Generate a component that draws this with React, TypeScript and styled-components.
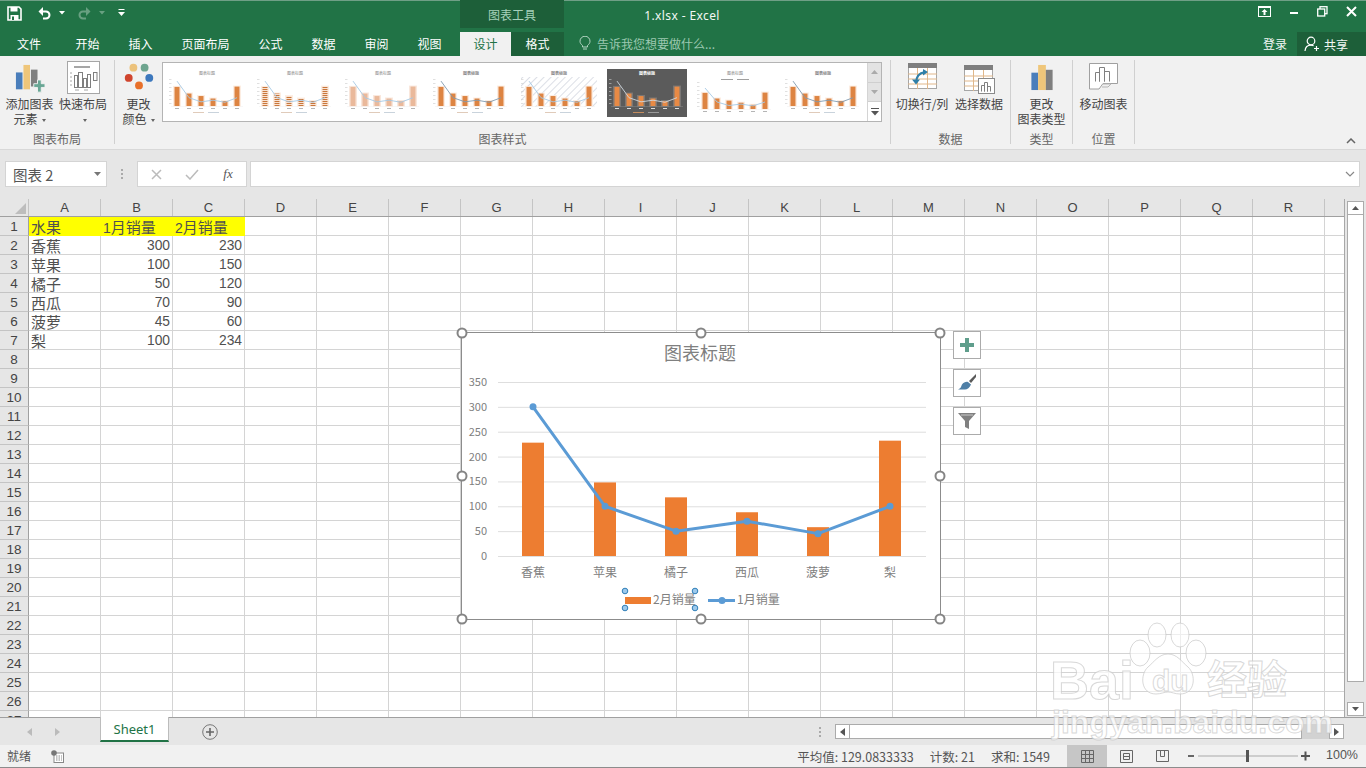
import React from "react";
import styled, { createGlobalStyle } from "styled-components";

const CJK = `"Noto Sans CJK SC", "Noto Sans", sans-serif`;
const LATIN = `"Liberation Sans", "Noto Sans CJK SC", sans-serif`;

const Global = createGlobalStyle`
  html, body { margin: 0; padding: 0; background: #fff; overflow: hidden; }
  * { box-sizing: border-box; }
`;

const Page = styled.div`
  position: relative; width: 1366px; height: 768px; overflow: hidden;
  display: flex; flex-direction: column;
  font-family: ${CJK}; font-size: 12px; color: #444;
`;

/* ---------- title bar ---------- */
const TitleBar = styled.div`
  height: 28px; flex: none; display: flex; align-items: stretch;
  background: #217346; border-top: 1px solid #6f9f86; color: #fff;
`;
const Qat = styled.div`
  width: 460px; flex: none; display: flex; align-items: center; padding-left: 7px; padding-bottom: 3px;
`;
const QatSlot = styled.span<{ $w: number }>`
  width: ${p => p.$w}px; flex: none; display: flex; align-items: center;
`;
const ContextLabel = styled.div`
  width: 104px; flex: none; background: #1d5f39; color: #a6d1ba; margin-top: -1px;
  display: flex; align-items: center; justify-content: center;
`;
const DocTitle = styled.div`
  width: 236px; flex: none; display: flex; align-items: center; justify-content: center; padding-top: 1px;
  font-family: "Noto Sans", sans-serif; font-size: 12px; letter-spacing: .4px; color: #f2f7f4;
`;
const WinControls = styled.div`
  margin-left: auto; display: flex; align-items: center; margin-top: -6px;
`;
const WinButton = styled.span`
  width: 29px; display: flex; justify-content: center; align-items: center;
`;

/* ---------- tab bar ---------- */
const TabBar = styled.div`
  height: 28px; flex: none; display: flex; align-items: stretch; background: #217346; color: #fff;
`;
const Tab = styled.div<{ $w: number; $active?: boolean; $dark?: boolean; $gap?: number }>`
  width: ${p => p.$w}px; flex: none; margin-left: ${p => p.$gap ?? 0}px;
  display: flex; align-items: center; justify-content: center; padding-bottom: 1px;
  margin-top: 4px;
  background: ${p => (p.$active ? "#f1f1f1" : p.$dark ? "#1d5f39" : "transparent")};
  color: ${p => (p.$active ? "#217346" : "#fff")};
`;
const Tell = styled.div`
  display: flex; align-items: center; gap: 6px; margin-left: 15px; color: #9cc8b0; padding-top: 3px;
`;
const SignIn = styled.div`
  margin-left: auto; width: 62px; display: flex; align-items: center; justify-content: center;
  padding-top: 3px; padding-left: 18px; color: #f2f7f4;
`;
const Share = styled.div`
  width: 69px; margin-top: 4px; background: #1d5f39; display: flex; align-items: center; gap: 3px; padding-left: 7px; color: #f2f7f4;
`;

/* ---------- ribbon ---------- */
const Ribbon = styled.div`
  height: 94px; flex: none; display: flex; background: #f1f1f1; border-bottom: 1px solid #d8d8d8; position: relative;
`;
const Group = styled.div<{ $w: number }>`
  width: ${p => p.$w}px; flex: none; display: flex; flex-direction: column; align-items: stretch;
  position: relative;
  &::after { content: ""; position: absolute; right: 0; top: 4px; bottom: 5px; width: 1px; background: #d0d0d0; }
`;
const GroupBody = styled.div`
  height: 75px; flex: none; display: flex; align-items: flex-start;
`;
const GroupLabel = styled.div`
  text-align: center; color: #666; line-height: 14px; padding-top: 1px; padding-right: 1px;
`;
const BigButton = styled.div<{ $w: number }>`
  width: ${p => p.$w}px; flex: none; display: flex; flex-direction: column; align-items: center;
`;
const IconBox = styled.div<{ $pb: number }>`
  height: 40px; flex: none; display: flex; align-items: flex-end; justify-content: center; padding-bottom: ${p => p.$pb}px;
`;
const BtnText = styled.div`
  color: #444; line-height: 15px; text-align: center; white-space: nowrap;
`;
const Caret = styled.span`
  display: inline-block; width: 0; height: 0; vertical-align: middle; margin-left: 4px;
  border-left: 2.5px solid transparent; border-right: 2.5px solid transparent; border-top: 3px solid #666;
`;
const Gallery = styled.div`
  width: 720px; height: 60px; margin: 6px 0 0 0; flex: none; display: flex;
  background: #fff; border: 1px solid #b4b4b4;
`;
const Thumbs = styled.div`
  flex: 1; display: flex; overflow: hidden;
`;
const GalleryScroll = styled.div`
  width: 14px; flex: none; display: flex; flex-direction: column; border-left: 1px solid #d4d4d4;
`;
const ScrollCell = styled.div<{ $on?: boolean }>`
  flex: 1; display: flex; align-items: center; justify-content: center;
  background: ${p => (p.$on ? "#fff" : "#e3e3e3")}; border-bottom: 1px solid #cfcfcf;
  &:last-child { border-bottom: 0; }
`;
const Collapse = styled.span`
  position: absolute; right: 10px; bottom: 5px; display: flex;
`;

/* ---------- formula bar ---------- */
const FormulaBar = styled.div`
  height: 49px; flex: none; background: #e6e6e6; display: flex; align-items: flex-start; padding: 11px 6px 0 5px;
`;
const NameBox = styled.div`
  width: 102px; height: 26px; background: #fff; border: 1px solid #d4d4d4; display: flex; align-items: center;
  justify-content: space-between; padding: 0 5px 0 7px; font-size: 14.5px; color: #555;
`;
const Dots = styled.div`
  width: 30px; flex: none; height: 26px; display: flex; flex-direction: column; align-items: center; justify-content: center; gap: 2px;
  & > i { width: 2px; height: 2px; background: #aaa; display: block; }
`;
const FxBox = styled.div`
  width: 110px; height: 26px; flex: none; background: #fff; border: 1px solid #d4d4d4; display: flex; align-items: center;
`;
const FxSlot = styled.span`
  width: 36px; display: flex; justify-content: center; align-items: center;
  font-family: "Liberation Serif", serif; font-style: italic; font-size: 13px; color: #555;
`;
const FormulaInput = styled.div`
  flex: 1; height: 26px; margin-left: 3px; background: #fff; border: 1px solid #d4d4d4; display: flex; align-items: center; justify-content: flex-end; padding-right: 4px;
`;

/* ---------- sheet ---------- */
const Sheet = styled.div`
  height: 518px; flex: none; position: relative; display: flex; background: #fff; overflow: hidden;
`;
const GridArea = styled.div`
  width: 1345px; flex: none; display: flex; flex-direction: column; overflow: hidden; border-right: 1px solid #a8a8a8;
`;
const HeadRow = styled.div`
  display: flex; height: 18px; flex: none; background: #e6e6e6; border-bottom: 1px solid #a0a0a0;
`;
const Corner = styled.div`
  width: 29px; flex: none; border-right: 1px solid #c4c4c4; position: relative; overflow: hidden;
  &::after { content: ""; position: absolute; right: 2px; bottom: 2px; width: 0; height: 0;
    border-left: 11px solid transparent; border-bottom: 11px solid #bdbdbd; }
`;
const ColHead = styled.div`
  width: 72px; flex: none; text-align: center; line-height: 18px; font-family: ${LATIN}; font-size: 13px; color: #444;
  border-right: 1px solid #c4c4c4;
`;
const Rows = styled.div`
  height: 500px; overflow: hidden;
`;
const Row = styled.div`
  display: flex; height: 19px;
`;
const RowHead = styled.div`
  width: 29px; flex: none; background: #e6e6e6; border-right: 1px solid #a0a0a0; border-bottom: 1px solid #c4c4c4;
  text-align: center; line-height: 18px; padding-top: 1px; font-family: "Liberation Sans", sans-serif; font-size: 13.5px; color: #444;
`;
const Cell = styled.div<{ $num?: boolean; $fill?: boolean }>`
  width: 72px; flex: none; height: 19px; white-space: nowrap;
  border-right: 1px solid ${p => (p.$fill ? "#ffff00" : "#d4d4d4")}; border-bottom: 1px solid ${p => (p.$fill ? "#ffff00" : "#d4d4d4")};
  background: ${p => (p.$fill ? "#ffff00" : "#fff")};
  padding: 1px 2px 0; line-height: 17px; color: #505050;
  text-align: ${p => (p.$num ? "right" : "left")};
  font-family: ${p => (p.$num ? `"Liberation Sans", sans-serif` : CJK)};
  font-size: ${p => (p.$num ? "13.8px" : "15px")};
`;
const Digit = styled.span`
  font-family: "Liberation Sans", sans-serif; font-size: 14px;
`;
const VScroll = styled.div`
  flex: 1; background: #e6e6e6; display: flex; flex-direction: column; padding: 2px 2px 1px 2px;
`;
const ScrollBtn = styled.div`
  height: 14px; flex: none; background: #fff; border: 1px solid #ababab; display: flex; align-items: center; justify-content: center;
`;
const VThumb = styled.div`
  height: 467px; flex: none; background: #fff; border: 1px solid #ababab; border-top: 0; margin-bottom: auto;
`;

/* ---------- chart overlay ---------- */
const ChartFrame = styled.div`
  position: absolute; left: 461px; top: 133px; width: 480px; height: 288px;
  background: #fff; border: 1px solid #8c8c8c;
`;
const ChartSvg = styled.svg`
  position: absolute; left: -1px; top: -1px; display: block; overflow: visible;
  & text { font-family: ${CJK}; fill: #808080; }
`;
const Handle = styled.span`
  position: absolute; width: 11px; height: 11px; border-radius: 50%; background: #fff; border: 2px solid #858585;
  transform: translate(-50%, -50%);
`;
const SideButtons = styled.div`
  position: absolute; left: 953px; top: 132px; display: flex; flex-direction: column; gap: 10px;
`;
const SideButton = styled.div`
  width: 28px; height: 28px; background: #fff; border: 1px solid #ababab; display: flex; align-items: center; justify-content: center;
`;

/* ---------- sheet tabs ---------- */
const TabsBar = styled.div`
  height: 28px; flex: none; background: #e6e6e6; border-top: 1px solid #a0a0a0; display: flex; align-items: flex-start;
`;
const NavArrows = styled.div`
  width: 100px; flex: none; height: 27px; display: flex; align-items: center; gap: 23px; padding-left: 27px;
`;
const SheetTab = styled.div`
  width: 69px; height: 25px; flex: none; margin-top: -1px; background: #fff; border: 1px solid #bcbcbc; border-top: 0; border-bottom: 2px solid #217346;
  color: #217346; font-family: "Noto Sans", sans-serif; font-size: 13px; text-align: center; line-height: 25px;
`;
const AddSheet = styled.div`
  margin-left: 33px; height: 27px; display: flex; align-items: center;
`;
const TabDots = styled(Dots)`
  margin-left: 596px; height: 27px; width: 12px;
`;
const HScroll = styled.div`
  margin-left: 9px; margin-top: 6px; width: 509px; height: 15px; flex: none; display: flex; background: #d2d2d2; border: 0;
`;
const HBtn = styled.div`
  width: 15px; flex: none; background: #fff; border: 1px solid #ababab; display: flex; align-items: center; justify-content: center;
`;
const HThumb = styled.div`
  width: 452px; flex: none; background: #fff; border: 1px solid #ababab; border-left: 0; margin-right: auto;
`;

/* ---------- status bar ---------- */
const StatusBar = styled.div`
  height: 23px; flex: none; background: #f1f1f1; border-bottom: 1px solid #8c8c8c; display: flex; align-items: stretch; color: #555;
`;
const Ready = styled.div`
  width: 51px; flex: none; padding-left: 7px; line-height: 21px;
`;
const MacroIcon = styled.div`
  display: flex; align-items: center;
`;
const Stats = styled.div`
  margin-left: auto; display: flex; gap: 16px; align-items: center; padding-right: 17px; white-space: nowrap; font-size: 12.5px;
`;
const ViewBtn = styled.div<{ $on?: boolean; $w: number }>`
  width: ${p => p.$w}px; flex: none; display: flex; align-items: center; justify-content: center;
  background: ${p => (p.$on ? "#c6c6c6" : "transparent")};
`;
const Zoom = styled.div`
  display: flex; align-items: center; margin-left: 9px;
`;
const ZoomPct = styled.div`
  width: 52px; flex: none; text-align: right; padding-right: 8px; line-height: 21px; font-family: "Liberation Sans", sans-serif; font-size: 12.5px;
`;

/* ---------- watermark ---------- */
const Watermark = styled.div`
  position: absolute; left: 1050px; top: 622px; width: 245px; height: 120px; pointer-events: none;
`;
const WmText = styled.span<{ $x: number; $y: number; $s: number }>`
  position: absolute; left: ${p => p.$x}px; top: ${p => p.$y}px; font-size: ${p => p.$s}px; line-height: 1;
  font-family: "Liberation Sans", "Noto Sans CJK SC", sans-serif; font-weight: 700; white-space: nowrap;
  color: rgba(255, 255, 255, 0.72); -webkit-text-stroke: 1px rgba(200, 200, 200, 0.7);
`;
const WmPaw = styled.svg`
  position: absolute; left: 78px; top: 0;
`;

/* ---------- icons ---------- */
const Save = () => (
  <svg width="15" height="15" viewBox="0 0 15 15"><path d="M1 1h11l2 2v11H1z" fill="none" stroke="#fff" strokeWidth="1.6"/><rect x="3.5" y="1" width="7" height="4.5" fill="#fff"/><rect x="3.5" y="9" width="8" height="5" fill="#fff"/><rect x="5" y="10.5" width="2" height="3.5" fill="#217346"/></svg>
);
const Undo = ({ dim }: { dim?: boolean }) => (
  <svg width="15" height="14" viewBox="0 0 15 14" style={dim ? { transform: "scaleX(-1)", opacity: .32 } : undefined}><path d="M3 5.5h6a3.4 3.4 0 0 1 0 7H6" fill="none" stroke="#fff" strokeWidth="2"/><path d="M6 1L1.5 5.5 6 10z" fill="#fff"/></svg>
);
const SmallCaret = ({ c = "#fff", o = 1 }: { c?: string; o?: number }) => (
  <svg width="6" height="4" viewBox="0 0 6 4" style={{ opacity: o }}><path d="M0 0h6L3 3.5z" fill={c}/></svg>
);
const Custom = () => (
  <svg width="7" height="8" viewBox="0 0 7 8"><rect width="6" height="1" x=".5" y="0" fill="#fff"/><path d="M0 3h7L3.5 7z" fill="#fff"/></svg>
);
const WinIcon = ({ k }: { k: string }) => {
  if (k === "ribbon") return <svg width="13" height="11" viewBox="0 0 13 11"><rect x=".5" y=".5" width="12" height="10" fill="none" stroke="#fff"/><path d="M6.5 3l3 3h-2v3h-2V6h-2z" fill="#fff"/><rect x="1" y="1" width="11" height="1" fill="#fff"/></svg>;
  if (k === "min") return <svg width="10" height="10" viewBox="0 0 10 10"><rect y="5" x="1" width="8" height="2" fill="#fff"/></svg>;
  if (k === "max") return <svg width="11" height="11" viewBox="0 0 11 11"><rect x="3" y=".7" width="7" height="7" fill="none" stroke="#fff" strokeWidth="1.3"/><rect x=".7" y="3" width="7" height="7" fill="#217346" stroke="#fff" strokeWidth="1.3"/></svg>;
  return <svg width="11" height="11" viewBox="0 0 11 11"><path d="M1 1l9 9M10 1l-9 9" stroke="#fff" strokeWidth="2"/></svg>;
};
const Bulb = () => (
  <svg width="12" height="15" viewBox="0 0 12 15"><path d="M3.5 9.5C2 8.3 1 7 1 5.2a5 5 0 0 1 10 0c0 1.8-1 3.1-2.500 4.300V11h-5z" fill="none" stroke="#b5d6c4"/><path d="M4 13h4" stroke="#b5d6c4"/></svg>
);
const Person = () => (
  <svg width="17" height="16" viewBox="0 0 17 16"><circle cx="7" cy="5" r="3.800" fill="none" stroke="#fff" strokeWidth="1.200"/><path d="M1 15c.3-3.500 2.800-5.800 6-5.800 1 0 1.800.2 2.600.6" fill="none" stroke="#fff" strokeWidth="1.200"/><path d="M12.500 10v5M10 12.500h5" stroke="#fff" strokeWidth="1.200"/></svg>
);
const AddElementIcon = () => (
  <svg width="30" height="30" viewBox="0 0 32 32"><rect x="1" y="9" width="7" height="18" fill="#4a7ebb"/><rect x="9" y="1" width="7" height="26" fill="#efc67a"/><rect x="17" y="6" width="7" height="18" fill="#7f7f7f"/><path d="M20 21h4v-4h4v4h4v4h-4v5h-4v-5h-4z" fill="#68a694" stroke="#f1f1f1"/></svg>
);
const QuickLayoutIcon = () => (
  <svg width="33" height="33" viewBox="0 0 33 33"><rect x=".5" y=".5" width="32" height="32" fill="#fff" stroke="#a6a6a6"/><rect x="7" y="5" width="16" height="2" fill="#a6a6a6"/><g fill="none" stroke="#7f7f7f"><rect x="7.500" y="14.500" width="3" height="12"/><rect x="11.500" y="11.500" width="4" height="15"/><rect x="16.500" y="17.500" width="3" height="9"/><rect x="20.500" y="13.500" width="3" height="13"/><rect x="26.500" y="11.500" width="3.500" height="8"/></g><path d="M3 12h2M3 16h2M3 20h2M3 24h2M8 29h4M17 29h4" stroke="#a6a6a6"/></svg>
);
const ColorsIcon = () => (
  <svg width="30" height="28" viewBox="0 0 32 30"><circle cx="10" cy="5" r="4.200" fill="#ecc27c"/><circle cx="22" cy="5" r="4.200" fill="#6ea58f"/><circle cx="5" cy="16" r="4.200" fill="#d0452e"/><circle cx="27" cy="16" r="4.200" fill="#3d78bd"/><circle cx="16" cy="24" r="4.200" fill="#e8702a"/></svg>
);
const GridBase = () => (
  <>
    <rect x=".5" y=".5" width="28" height="25" fill="#fff" stroke="#a6a6a6"/>
    <rect x="0" y="0" width="29" height="5" fill="#7f7f7f"/>
    <path d="M0 11h29M0 16h29M0 21h29" stroke="#e0b78a"/>
    <path d="M9.500 5v21M19.500 5v21" stroke="#e0b78a"/>
  </>
);
const SwitchIcon = () => (
  <svg width="29" height="27" viewBox="0 0 29 27"><GridBase/><path d="M8 20c0-6 3-10 9-11" fill="none" stroke="#2f7fa8" strokeWidth="2"/><path d="M4 16.500l4 5 4-5zM15 6l5 3-5 3.500z" fill="#2f7fa8"/></svg>
);
const SelectDataIcon = () => (
  <svg width="31" height="29" viewBox="0 0 31 29"><GridBase/><rect x="14.500" y="13.500" width="16" height="15" fill="#fff" stroke="#8a8a8a"/><path d="M17.500 26.500v-6h3v6M20.500 26.500v-9h3v9M23.500 26.500v-5h3v5" fill="none" stroke="#808080"/></svg>
);
const ChangeTypeIcon = () => (
  <svg width="24" height="27" viewBox="0 0 24 28"><rect x="1" y="9" width="7" height="18" fill="#4a7ebb"/><rect x="8" y="1" width="8" height="26" fill="#efc67a"/><rect x="16" y="6" width="7" height="21" fill="#7f7f7f"/></svg>
);
const MoveIcon = () => (
  <svg width="29" height="27" viewBox="0 0 29 27"><path d="M.5.5h28v20H14l-4 5.500H.5z" fill="#fff" stroke="#a0a0a0"/><path d="M6.500 18.500v-9h4v9M10.500 18.500v-14h5v14M15.500 18.500v-10h5v10" fill="none" stroke="#808080"/><path d="M14 21h8l-3 3h-6" fill="none" stroke="#b5b5b5"/></svg>
);
const Arrow = ({ up, c = "#777" }: { up?: boolean; c?: string }) => (
  <svg width="7" height="4" viewBox="0 0 7 4"><path d={up ? "M0 4h7L3.500 0z" : "M0 0h7L3.500 4z"} fill={c}/></svg>
);
const HArrow = ({ left, c = "#555" }: { left?: boolean; c?: string }) => (
  <svg width="5" height="8" viewBox="0 0 5 8"><path d={left ? "M5 0v8L0 4z" : "M0 0v8l5-4z"} fill={c}/></svg>
);
const MoreIcon = () => (
  <svg width="8" height="8" viewBox="0 0 8 8"><rect width="8" height="1" fill="#555"/><path d="M0 3h8L4 7.500z" fill="#555"/></svg>
);

/* ---------- gallery thumbnails ---------- */
const values = [300, 100, 50, 70, 45, 100];
const bars = [230, 150, 120, 90, 60, 234];
const xs = [14, 26, 38, 50, 62, 74];

const ThumbChart = ({ v }: { v: number }) => {
  const dark = v === 5;
  const base = v === 6 ? 46 : 43;
  const k = v === 6 ? 0.07 : 0.083;
  const barColor = v === 2 ? "#eab99b" : dark ? "#e88a45" : "#dd8442";
  const line = v === 7 || v === 3 ? "#7f9ab0" : dark ? "#cfd8e0" : "#a5c8e4";
  const pts = values.map((n, i) => `${xs[i]},${base - n * k}`).join(" ");
  return (
    <svg width="88" height="58" viewBox="0 0 88 58" style={{ flex: "none", display: "block" }}>
      <defs>
        <pattern id="stripes" width="4" height="2" patternUnits="userSpaceOnUse"><rect width="4" height="1.100" fill="#c9763a"/></pattern>
        <pattern id="hatch" width="5" height="5" patternUnits="userSpaceOnUse" patternTransform="rotate(45)"><rect width="1" height="5" fill="#dcdfe6"/></pattern>
      </defs>
      {dark && <rect x="4" y="6" width="80" height="48" fill="#5b5b5b"/>}
      {v === 4 && <rect x="6" y="14" width="76" height="30" fill="url(#hatch)"/>}
      <text x="44" y="12" textAnchor="middle" fontSize="4" fontWeight={v === 3 || v === 4 || v === 5 || v === 7 ? 700 : 400} fill={dark ? "#fff" : "#888"} fontFamily={CJK}>图表标题</text>
      {v === 6 && <g><rect x="30" y="16" width="12" height="1" fill="#a0a0a0"/><rect x="46" y="16" width="12" height="1" fill="#a0a0a0"/></g>}
      {[0, 1, 2, 3, 4, 5, 6].map(i => <rect key={i} x="6" y={base - 3 - i * 4} width="2.500" height=".6" fill="#ccc"/>)}
      <rect x="8" y={base} width="72" height=".5" fill={dark ? "#888" : "#eee"}/>
      {bars.map((b, i) => {
        const h = b * k;
        return (
          <g key={i}>
            <rect x={xs[i] - 4} y={base - h - 1} width="8" height={h + 1.500} fill={v === 2 ? "#f8e4d8" : "#fcebdf"} opacity={dark ? .2 : .9}/>
            <rect x={xs[i] - 2.500} y={base - h} width="5" height={h} fill={v === 1 ? "url(#stripes)" : barColor}/>
            <rect x={xs[i] - 2} y={base + 2} width="4" height="1" fill={dark ? "#ddd" : "#b5b5b5"}/>
          </g>
        );
      })}
      <polyline points={pts} fill="none" stroke={line} strokeWidth=".9"/>
      {v !== 6 && <g><rect x="30" y={base + 6} width="11" height=".8" fill={dark ? "#e09a60" : "#d9bfa9"}/><rect x="45" y={base + 6} width="11" height=".8" fill={dark ? "#aaa" : "#bcc8d4"}/></g>}
    </svg>
  );
};

/* ---------- data ---------- */
const columns = "ABCDEFGHIJKLMNOPQRS".split("");
const table: [string, number, number][] = [
  ["香蕉", 300, 230], ["苹果", 100, 150], ["橘子", 50, 120],
  ["西瓜", 70, 90], ["菠萝", 45, 60], ["梨", 100, 234],
];
const rowNumbers = Array.from({ length: 27 }, (_, i) => i + 1);
const emptyFrom = (n: number) => columns.slice(n).map(c => <Cell key={c} />);

const chartAxis = [350, 300, 250, 200, 150, 100, 50, 0];
const y0 = 224;
const unit = 174 / 350;
const cx = [72, 144, 215, 286, 357, 429];
const cats = ["香蕉", "苹果", "橘子", "西瓜", "菠萝", "梨"];
const linePts = values.map((n, i) => `${cx[i]},${y0 - n * unit}`).join(" ");
const handles: [number, number][] = [[0, 0], [50, 0], [100, 0], [0, 50], [100, 50], [0, 100], [50, 100], [100, 100]];

const Chart = () => (
  <ChartFrame>
    <ChartSvg width="480" height="288" viewBox="0 0 480 288">
      <text x="239" y="28" textAnchor="middle" fontSize="18">图表标题</text>
      {chartAxis.map(n => (
        <g key={n}>
          <line x1="37" x2="465" y1={y0 - n * unit + .5} y2={y0 - n * unit + .5} stroke="#dedede"/>
          <text x="26" y={y0 - n * unit + 4} textAnchor="end" fontSize="11">{n}</text>
        </g>
      ))}
      {bars.map((b, i) => <rect key={i} x={cx[i] - 11} y={y0 - b * unit + 1} width="22" height={b * unit - 1} fill="#ed7d31"/>)}
      <polyline points={linePts} fill="none" stroke="#5b9bd5" strokeWidth="3" strokeLinejoin="round"/>
      {values.map((n, i) => <circle key={i} cx={cx[i]} cy={y0 - n * unit} r="3.500" fill="#5b9bd5"/>)}
      {cats.map((c, i) => <text key={c} x={cx[i]} y={245} textAnchor="middle" fontSize="12">{c}</text>)}
      <rect x="164" y="265" width="26" height="7" fill="#ed7d31"/>
      <text x="192" y="272" fontSize="12">2月销量</text>
      <line x1="247" x2="274" y1="268.500" y2="268.500" stroke="#5b9bd5" strokeWidth="3"/>
      <circle cx="261" cy="268.500" r="3.500" fill="#5b9bd5"/>
      <text x="276" y="272" fontSize="12">1月销量</text>
      {[[164, 259], [164, 276], [234, 259], [234, 276]].map(([x, y]) => (
        <circle key={`${x}-${y}`} cx={x} cy={y} r="2.800" fill="#9dc9ec" stroke="#2f7fb8"/>
      ))}
    </ChartSvg>
    {handles.map(([x, y]) => <Handle key={`${x}-${y}`} style={{ left: `${x}%`, top: `${y}%` }} />)}
  </ChartFrame>
);

const App = () => (
  <Page>
    <Global />
    <TitleBar>
      <Qat>
        <QatSlot $w={30}><Save /></QatSlot>
        <QatSlot $w={22}><Undo /></QatSlot>
        <QatSlot $w={18}><SmallCaret /></QatSlot>
        <QatSlot $w={22}><Undo dim /></QatSlot>
        <QatSlot $w={19}><SmallCaret o={.32} /></QatSlot>
        <QatSlot $w={12}><Custom /></QatSlot>
      </Qat>
      <ContextLabel>图表工具</ContextLabel>
      <DocTitle>1.xlsx - Excel</DocTitle>
      <WinControls>
        <WinButton><WinIcon k="ribbon" /></WinButton>
        <WinButton><WinIcon k="min" /></WinButton>
        <WinButton><WinIcon k="max" /></WinButton>
        <WinButton><WinIcon k="close" /></WinButton>
      </WinControls>
    </TitleBar>
    <TabBar>
      <Tab $w={58}>文件</Tab>
      <Tab $w={53} $gap={3}>开始</Tab>
      <Tab $w={53}>插入</Tab>
      <Tab $w={77}>页面布局</Tab>
      <Tab $w={53}>公式</Tab>
      <Tab $w={53}>数据</Tab>
      <Tab $w={53}>审阅</Tab>
      <Tab $w={53}>视图</Tab>
      <Tab $w={51} $gap={4} $active>设计</Tab>
      <Tab $w={53} $dark>格式</Tab>
      <Tell><Bulb />告诉我您想要做什么...</Tell>
      <SignIn>登录</SignIn>
      <Share><Person />共享</Share>
    </TabBar>
    <Ribbon>
      <Group $w={115}>
        <GroupBody>
          <BigButton $w={59}>
            <IconBox $pb={2}><AddElementIcon /></IconBox>
            <BtnText>添加图表</BtnText>
            <BtnText>元素<Caret /></BtnText>
          </BigButton>
          <BigButton $w={48}>
            <IconBox $pb={2}><QuickLayoutIcon /></IconBox>
            <BtnText>快速布局</BtnText>
            <BtnText><Caret /></BtnText>
          </BigButton>
        </GroupBody>
        <GroupLabel>图表布局</GroupLabel>
      </Group>
      <Group $w={776}>
        <GroupBody>
          <BigButton $w={47}>
            <IconBox $pb={5}><ColorsIcon /></IconBox>
            <BtnText>更改</BtnText>
            <BtnText>颜色<Caret /></BtnText>
          </BigButton>
          <Gallery>
            <Thumbs>
              {[0, 1, 2, 3, 4, 5, 6, 7].map(v => <ThumbChart key={v} v={v} />)}
            </Thumbs>
            <GalleryScroll>
              <ScrollCell><Arrow up c="#aaa" /></ScrollCell>
              <ScrollCell><Arrow c="#aaa" /></ScrollCell>
              <ScrollCell $on><MoreIcon /></ScrollCell>
            </GalleryScroll>
          </Gallery>
        </GroupBody>
        <GroupLabel>图表样式</GroupLabel>
      </Group>
      <Group $w={120}>
        <GroupBody>
          <BigButton $w={62}>
            <IconBox $pb={6}><SwitchIcon /></IconBox>
            <BtnText>切换行/列</BtnText>
          </BigButton>
          <BigButton $w={52}>
            <IconBox $pb={2}><SelectDataIcon /></IconBox>
            <BtnText>选择数据</BtnText>
          </BigButton>
        </GroupBody>
        <GroupLabel>数据</GroupLabel>
      </Group>
      <Group $w={62}>
        <GroupBody>
          <BigButton $w={61}>
            <IconBox $pb={5}><ChangeTypeIcon /></IconBox>
            <BtnText>更改</BtnText>
            <BtnText>图表类型</BtnText>
          </BigButton>
        </GroupBody>
        <GroupLabel>类型</GroupLabel>
      </Group>
      <Group $w={62}>
        <GroupBody>
          <BigButton $w={61}>
            <IconBox $pb={6}><MoveIcon /></IconBox>
            <BtnText>移动图表</BtnText>
          </BigButton>
        </GroupBody>
        <GroupLabel>位置</GroupLabel>
      </Group>
      <Collapse>
        <svg width="10" height="6" viewBox="0 0 10 6"><path d="M1 5l4-4 4 4" fill="none" stroke="#666" strokeWidth="1.500"/></svg>
      </Collapse>
    </Ribbon>
    <FormulaBar>
      <NameBox>图表 2<Arrow c="#777" /></NameBox>
      <Dots><i /><i /><i /></Dots>
      <FxBox>
        <FxSlot><svg width="11" height="11" viewBox="0 0 11 11"><path d="M1 1l9 9M10 1l-9 9" stroke="#bbb" strokeWidth="1.500"/></svg></FxSlot>
        <FxSlot><svg width="14" height="11" viewBox="0 0 14 11"><path d="M1 6l4 4 8-9" fill="none" stroke="#bbb" strokeWidth="1.500"/></svg></FxSlot>
        <FxSlot>fx</FxSlot>
      </FxBox>
      <FormulaInput>
        <svg width="10" height="6" viewBox="0 0 10 6"><path d="M1 1l4 4 4-4" fill="none" stroke="#888" strokeWidth="1.200"/></svg>
      </FormulaInput>
    </FormulaBar>
    <Sheet>
      <GridArea>
        <HeadRow>
          <Corner />
          {columns.map(c => <ColHead key={c}>{c === "S" ? "" : c}</ColHead>)}
        </HeadRow>
        <Rows>
          {rowNumbers.map(n => {
            if (n === 1) return (
              <Row key={n}>
                <RowHead>1</RowHead>
                <Cell $fill>水果</Cell>
                <Cell $fill><Digit>1</Digit>月销量</Cell>
                <Cell $fill><Digit>2</Digit>月销量</Cell>
                {emptyFrom(3)}
              </Row>
            );
            const d = table[n - 2];
            if (d) return (
              <Row key={n}>
                <RowHead>{n}</RowHead>
                <Cell>{d[0]}</Cell>
                <Cell $num>{d[1]}</Cell>
                <Cell $num>{d[2]}</Cell>
                {emptyFrom(3)}
              </Row>
            );
            return (
              <Row key={n}>
                <RowHead>{n}</RowHead>
                {emptyFrom(0)}
              </Row>
            );
          })}
        </Rows>
      </GridArea>
      <VScroll>
        <ScrollBtn><Arrow up c="#555" /></ScrollBtn>
        <VThumb />
        <ScrollBtn><Arrow c="#555" /></ScrollBtn>
      </VScroll>
      <Chart />
      <SideButtons>
        <SideButton>
          <svg width="16" height="16" viewBox="0 0 16 16"><path d="M6 1h4v5h5v4h-5v5H6v-5H1V6h5z" fill="#5f9e8c"/></svg>
        </SideButton>
        <SideButton>
          <svg width="20" height="20" viewBox="0 0 20 20"><path d="M19 1l-7 7 2 2 5-6z" fill="#5a5a5a"/><path d="M11 9l3 2.500c-1 3-4 5-6 5H1c3-1 3-3 4-5 1.500-2 4-3 6-2.500z" fill="#4f7fa6"/></svg>
        </SideButton>
        <SideButton>
          <svg width="20" height="20" viewBox="0 0 20 20"><path d="M1 2h18l-7 8v8l-4-2v-6z" fill="#808080"/><path d="M4 4h12" stroke="#c9c9c9"/></svg>
        </SideButton>
      </SideButtons>
    </Sheet>
    <TabsBar>
      <NavArrows><HArrow left c="#bbb" /><HArrow c="#bbb" /></NavArrows>
      <SheetTab>Sheet1</SheetTab>
      <AddSheet>
        <svg width="16" height="16" viewBox="0 0 16 16"><circle cx="8" cy="8" r="7.300" fill="none" stroke="#777"/><path d="M4 8h8M8 4v8" stroke="#666" strokeWidth="1.600"/></svg>
      </AddSheet>
      <TabDots><i /><i /><i /></TabDots>
      <HScroll>
        <HBtn><HArrow left /></HBtn>
        <HThumb />
        <HBtn><HArrow /></HBtn>
      </HScroll>
    </TabsBar>
    <StatusBar>
      <Ready>就绪</Ready>
      <MacroIcon>
        <svg width="13" height="13" viewBox="0 0 13 13"><rect x="3" y="3" width="9.500" height="9.500" fill="#fff" stroke="#888"/><path d="M5 6h6M5 8h6M5 10h6" stroke="#888" strokeDasharray="1.500 1"/><circle cx="3" cy="3" r="2.800" fill="#777"/></svg>
      </MacroIcon>
      <Stats>
        <span>平均值: 129.0833333</span>
        <span>计数: 21</span>
        <span>求和: 1549</span>
      </Stats>
      <ViewBtn $on $w={40}>
        <svg width="13" height="13" viewBox="0 0 13 13"><path d="M.5.500h12v12H.500zM4.500.5v12M8.500.5v12M.5 4.500h12M.5 8.500h12" fill="none" stroke="#666"/></svg>
      </ViewBtn>
      <ViewBtn $w={38}>
        <svg width="13" height="13" viewBox="0 0 13 13"><path d="M.5.500h12v12H.500z" fill="none" stroke="#666"/><path d="M3.500 3.500h6v6h-6zM3.500 6.500h6" fill="none" stroke="#666"/></svg>
      </ViewBtn>
      <ViewBtn $w={34}>
        <svg width="13" height="12" viewBox="0 0 13 12"><path d="M.5.500h12v11H.500zM4.500.5v6h4v-6" fill="none" stroke="#666"/></svg>
      </ViewBtn>
      <Zoom>
        <svg width="126" height="16" viewBox="0 0 126 16">
          <rect x="0" y="7" width="6" height="2" fill="#666"/>
          <rect x="10" y="7.500" width="100" height="1" fill="#aaa"/>
          <rect x="58" y="2" width="3" height="12" fill="#555"/>
          <path d="M113 8h9M117.500 3.500v9" stroke="#555" strokeWidth="2"/>
        </svg>
      </Zoom>
      <ZoomPct>100%</ZoomPct>
    </StatusBar>
    <Watermark>
      <WmText $x={0} $y={31} $s={54}>Bai</WmText>
      <WmPaw width="80" height="76" viewBox="0 0 80 76" fill="rgba(255,255,255,.6)" stroke="rgba(200,200,200,.7)">
        <ellipse cx="29" cy="13" rx="9" ry="12"/>
        <ellipse cx="52" cy="13" rx="9" ry="12"/>
        <ellipse cx="12" cy="31" rx="10" ry="13"/>
        <ellipse cx="68" cy="31" rx="10" ry="13"/>
        <path d="M40 32c9 0 14 8 20 13 8 7 8 27-8 27-5 0-8-2-12-2s-7 2-12 2C12 72 12 52 20 45c6-5 11-13 20-13z"/>
      </WmPaw>
      <WmText $x={102} $y={44} $s={30}>du</WmText>
      <WmText $x={157} $y={38} $s={40}>经验</WmText>
      <WmText $x={2} $y={84} $s={32}>jingyan.baidu.com</WmText>
    </Watermark>
  </Page>
);

export default App;
